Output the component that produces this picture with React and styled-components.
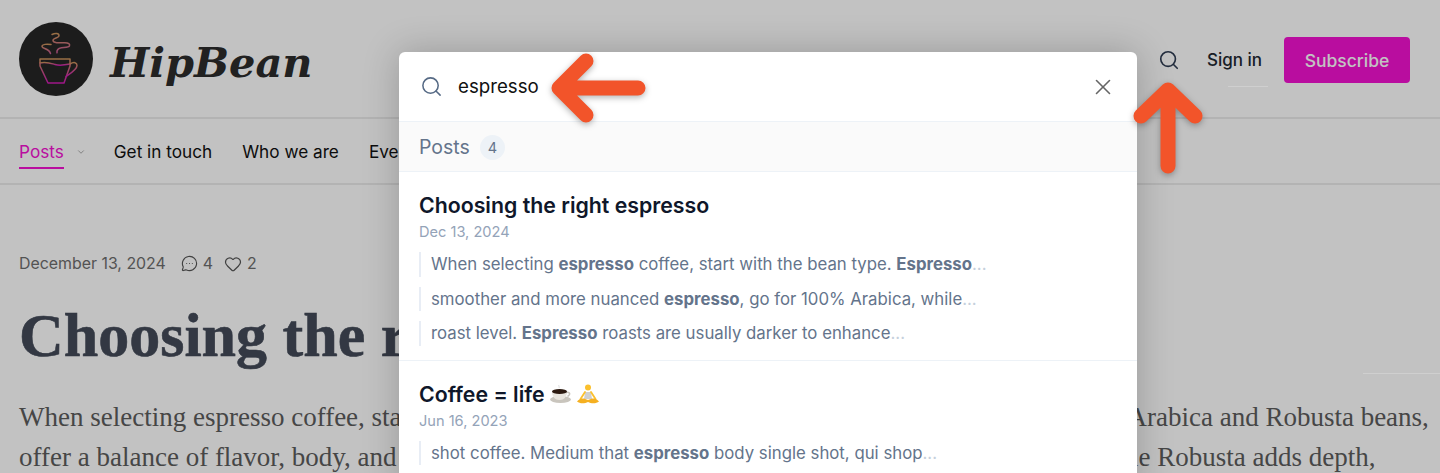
import React from 'react';
import styled, { createGlobalStyle } from 'styled-components';
import { Search, X, ChevronDown, MessageCircleMore, Heart } from 'lucide-react';

const GlobalStyle = createGlobalStyle`
  html, body { margin: 0; padding: 0; background: #fff; }
  body { font-family: Inter, "Liberation Sans", sans-serif; }
  * { box-sizing: border-box; }
`;

const Logo = () => (
  <svg width="74" height="74" viewBox="0 0 74 74">
    <defs>
      <linearGradient id="cup" x1="0" y1="0" x2="0" y2="1">
        <stop offset="0" stopColor="#c9925a" />
        <stop offset="1" stopColor="#d01cb4" />
      </linearGradient>
      <linearGradient id="steam" x1="0" y1="0" x2="0" y2="1">
        <stop offset="0" stopColor="#c9925a" />
        <stop offset="1" stopColor="#c85a96" />
      </linearGradient>
    </defs>
    <circle cx="37" cy="37" r="37" fill="#262626" />
    <g fill="none" strokeWidth="1.500" strokeLinecap="round" strokeLinejoin="round">
      <path d="M33 12.500c3-1.500 7-1.500 7 1 0 3-6 2-6 5 0 2.500 6 2.500 11 2.300 5-.2 6 1.500 5.500 3-.6 2-5 1.600-8 2-3 .5-5 2-4.500 5" stroke="url(#steam)" />
      <path d="M32 22.500c-4-.5-9-.5-9 2 0 2.500 7 1.500 8.500 7" stroke="url(#steam)" />
      <path d="M21 37h30v7l-6 17H29l-8-17z" stroke="url(#cup)" />
      <path d="M21 41c6-1.500 10 0 15 1.500s10 .5 15-.5" stroke="url(#cup)" />
      <path d="M51 42c4-2.500 7-1.500 7 1.500 0 4-6 7.500-11 11" stroke="url(#cup)" />
    </g>
  </svg>
);

const CoffeeEmoji = () => (
  <svg width="22" height="20" viewBox="0 0 22 20">
    <path d="M9 1c-1 1 1 1.500 0 3" stroke="#ddd" fill="none" />
    <ellipse cx="10.500" cy="15.500" rx="10.500" ry="3.500" fill="#c9c5bd" />
    <path d="M2 7h15c0 6-3 9-7.500 9S2 13 2 7z" fill="#e9e5de" />
    <path d="M16 8.500c4-1 5 2 1.500 4" stroke="#c9c5bd" strokeWidth="1.500" fill="none" />
    <ellipse cx="9.500" cy="7.500" rx="7.500" ry="2.500" fill="#2c1a10" />
  </svg>
);

const YogaEmoji = () => (
  <svg width="22" height="20" viewBox="0 0 22 20">
    <circle cx="11" cy="3.500" r="3" fill="#fbc02d" />
    <path d="M8 8h6l1 7H7z" fill="#cfcfcf" />
    <path d="M8 8 3.500 15M14 8l4.500 7" stroke="#fbc02d" strokeWidth="1.800" strokeLinecap="round" />
    <path d="M0 17.500c3-4 7-3.500 11-1.500 4-2 8-2.500 11 1.500-3 2.500-8 2-11 .5-3 1.500-8 2-11-.5z" fill="#f5b021" />
  </svg>
);

const snippets = [
  ['When selecting ', <b key="a">espresso</b>, ' coffee, start with the bean type. ', <b key="b">Espresso</b>],
  ['smoother and more nuanced ', <b key="a">espresso</b>, ', go for 100% Arabica, while'],
  ['roast level. ', <b key="a">Espresso</b>, ' roasts are usually darker to enhance'],
];

export default function App() {
  return (
    <>
      <GlobalStyle />
      <Page>
        <Header>
          <Brand>
            <Logo />
            <BrandName>HipBean</BrandName>
          </Brand>
          <HeaderActions>
            <Search size={22} color="#2f3c52" strokeWidth={1.8} />
            <SignIn>Sign in</SignIn>
            <SubscribeButton>Subscribe</SubscribeButton>
          </HeaderActions>
        </Header>
        <Nav>
          <NavLink $active>Posts</NavLink>
          <NavCaret><ChevronDown size={10} color="#9a9a9a" /></NavCaret>
          <NavLink>Get in touch</NavLink>
          <NavLink>Who we are</NavLink>
          <NavLink>Events</NavLink>
        </Nav>
        <Article>
          <Meta>
            <span>December 13, 2024</span>
            <MetaCount><MessageCircleMore size={17} strokeWidth={1.6} />4</MetaCount>
            <MetaCount><Heart size={18} strokeWidth={1.6} />2</MetaCount>
          </Meta>
          <Title>Choosing the right espresso</Title>
          <Lead>
            When selecting espresso coffee, start with the bean type. Espresso blends typically meld together both Arabica and Robusta beans,<br />
            offer a balance of flavor, body, and crema. Arabica brings its natural sweetness and vibrant acidity, while Robusta adds depth,
          </Lead>
        </Article>
        <Backdrop />
        <FaintLine $left={1228} $top={86} $width={40} />
        <FaintLine $left={1363} $top={373} $width={77} />
        <Modal>
          <SearchRow>
            <Search size={23} color="#566a85" strokeWidth={1.6} />
            <SearchText>espresso</SearchText>
            <CloseIcon><X size={26} color="#666" strokeWidth={1.5} /></CloseIcon>
          </SearchRow>
          <GroupHeader>
            Posts
            <CountBadge>4</CountBadge>
          </GroupHeader>
          <Result>
            <ResultTitle>Choosing the right espresso</ResultTitle>
            <ResultDate>Dec 13, 2024</ResultDate>
            <Snippets>
              {snippets.map((parts, i) => (
                <Snippet key={i}>{parts}<Dots>...</Dots></Snippet>
              ))}
            </Snippets>
          </Result>
          <Result>
            <ResultTitle>Coffee = life <CoffeeEmoji /> <YogaEmoji /></ResultTitle>
            <ResultDate>Jun 16, 2023</ResultDate>
            <Snippets>
              <Snippet>shot coffee. Medium that <b>espresso</b> body single shot, qui shop<Dots>...</Dots></Snippet>
            </Snippets>
          </Result>
        </Modal>
        <ArrowLeft viewBox="0 0 110 84" width="110" height="84">
          <path d="M92 42H13M40 15 13 42l27 27" />
        </ArrowLeft>
        <ArrowUp viewBox="0 0 84 110" width="84" height="110">
          <path d="M42 91V15M15 41 42 15l27 26" />
        </ArrowUp>
      </Page>
    </>
  );
}

const Page = styled.div`
  position: relative;
  width: 1440px;
  height: 473px;
  overflow: hidden;
  background: #fff;
`;

const Backdrop = styled.div`
  position: absolute;
  inset: 0;
  background: rgba(0, 0, 0, 0.24);
`;

const FaintLine = styled.div`
  position: absolute;
  left: ${(p) => p.$left}px;
  top: ${(p) => p.$top}px;
  width: ${(p) => p.$width}px;
  height: 1px;
  background: #cfcfcf;
`;

const Header = styled.header`
  display: flex;
  align-items: center;
  justify-content: space-between;
  height: 119px;
  padding: 0 30px 0 19px;
  border-bottom: 2px solid #ececec;
`;

const Brand = styled.div`
  display: flex;
  align-items: center;
  gap: 17px;
`;

const BrandName = styled.div`
  margin-top: 8px;
  font-family: "DejaVu Serif", serif;
  font-style: italic;
  font-weight: 700;
  font-size: 41.500px;
  color: #2c2c2c;
`;

const HeaderActions = styled.div`
  display: flex;
  align-items: center;
  gap: 27px;
  margin-top: 3px;
`;

const SignIn = styled.span`
  font-size: 17px;
  font-weight: 500;
  color: #222831;
`;

const SubscribeButton = styled.button`
  width: 126px;
  height: 46px;
  margin-left: -5px;
  border: none;
  border-radius: 4px;
  background: #f412d2;
  color: #fff;
  font-family: inherit;
  font-size: 17.500px;
  font-weight: 500;
`;

const Nav = styled.nav`
  display: flex;
  align-items: center;
  height: 66px;
  padding: 1px 0 0 19px;
  border-bottom: 2px solid #ececec;
`;

const NavLink = styled.a`
  margin-right: ${(p) => (p.$active ? '0' : '30px')};
  padding: 6px 0 5px;
  font-size: 17.200px;
  line-height: 21px;
  color: ${(p) => (p.$active ? '#f412d2' : '#111')};
  border-bottom: 2px solid ${(p) => (p.$active ? '#f412d2' : 'transparent')};
`;

const NavCaret = styled.span`
  display: flex;
  margin: 0 28px 0 12px;
`;

const Article = styled.article`
  padding: 69px 0 0 19px;
  width: 1440px;
`;

const Meta = styled.div`
  display: flex;
  align-items: center;
  gap: 15px;
  font-size: 15.900px;
  color: #6e6e6e;
`;

const MetaCount = styled.span`
  display: flex;
  align-items: center;
  gap: 5px;
  margin-right: -4px;
  svg { color: #555; }
`;

const Title = styled.h1`
  margin: 24px 0 0;
  font-family: "Liberation Serif", serif;
  font-size: 62px;
  line-height: 76px;
  font-weight: 700;
  white-space: nowrap;
  color: #434a58;
  -webkit-text-stroke: 0.6px #434a58;
`;

const Lead = styled.p`
  margin: 24px 0 0;
  white-space: nowrap;
  font-family: "Liberation Serif", serif;
  font-size: 27px;
  line-height: 40px;
  color: #5c5c5c;
`;

const Modal = styled.div`
  position: absolute;
  left: 399px;
  top: 52px;
  width: 738px;
  height: 440px;
  border-radius: 6px;
  background: #fff;
  box-shadow: 0 0 36px rgba(0, 0, 0, 0.22);
  overflow: hidden;
`;

const SearchRow = styled.div`
  display: flex;
  align-items: center;
  height: 70px;
  padding: 0 21px 0 21px;
  border-bottom: 1px solid #edf2f7;
`;

const SearchText = styled.span`
  flex: 1;
  margin-left: 15px;
  font-size: 18.700px;
  color: #111;
`;

const CloseIcon = styled.span`
  display: flex;
`;

const GroupHeader = styled.div`
  display: flex;
  align-items: center;
  gap: 10px;
  height: 50px;
  padding: 1px 0 0 20px;
  background: #fafafa;
  border-bottom: 1px solid #edf2f7;
  font-size: 19.500px;
  color: #64748b;
`;

const CountBadge = styled.span`
  display: flex;
  align-items: center;
  justify-content: center;
  width: 25px;
  height: 25px;
  border-radius: 50%;
  background: #edf2f7;
  font-size: 14.500px;
  color: #64748b;
`;

const Result = styled.div`
  padding: 20px 20px 14px;
  border-bottom: 1px solid #edf2f7;
`;

const ResultTitle = styled.div`
  display: flex;
  align-items: center;
  gap: 5px;
  height: 26px;
  font-size: 21.300px;
  font-weight: 600;
  color: #0f172a;
`;

const ResultDate = styled.div`
  margin-top: 4px;
  font-size: 14.600px;
  line-height: 20px;
  color: #94a3b8;
`;

const Snippets = styled.div`
  display: flex;
  flex-direction: column;
  gap: 10px;
  margin-top: 10px;
`;

const Snippet = styled.div`
  padding-left: 10px;
  border-left: 2px solid #e8edf5;
  font-size: 16.800px;
  line-height: 24.500px;
  color: #64748b;
  white-space: nowrap;
  b { font-weight: 700; }
`;

const Dots = styled.span`
  color: #c5d0dc;
`;

const ArrowLeft = styled.svg`
  position: absolute;
  left: 546px;
  top: 46px;
  fill: none;
  stroke: #f2542a;
  stroke-width: 15px;
  stroke-linecap: round;
  stroke-linejoin: round;
  filter: drop-shadow(0 2px 3px rgba(0, 0, 0, 0.3));
`;

const ArrowUp = styled.svg`
  position: absolute;
  left: 1126px;
  top: 75px;
  fill: none;
  stroke: #f2542a;
  stroke-width: 15px;
  stroke-linecap: round;
  stroke-linejoin: round;
  filter: drop-shadow(0 2px 3px rgba(0, 0, 0, 0.3));
`;
